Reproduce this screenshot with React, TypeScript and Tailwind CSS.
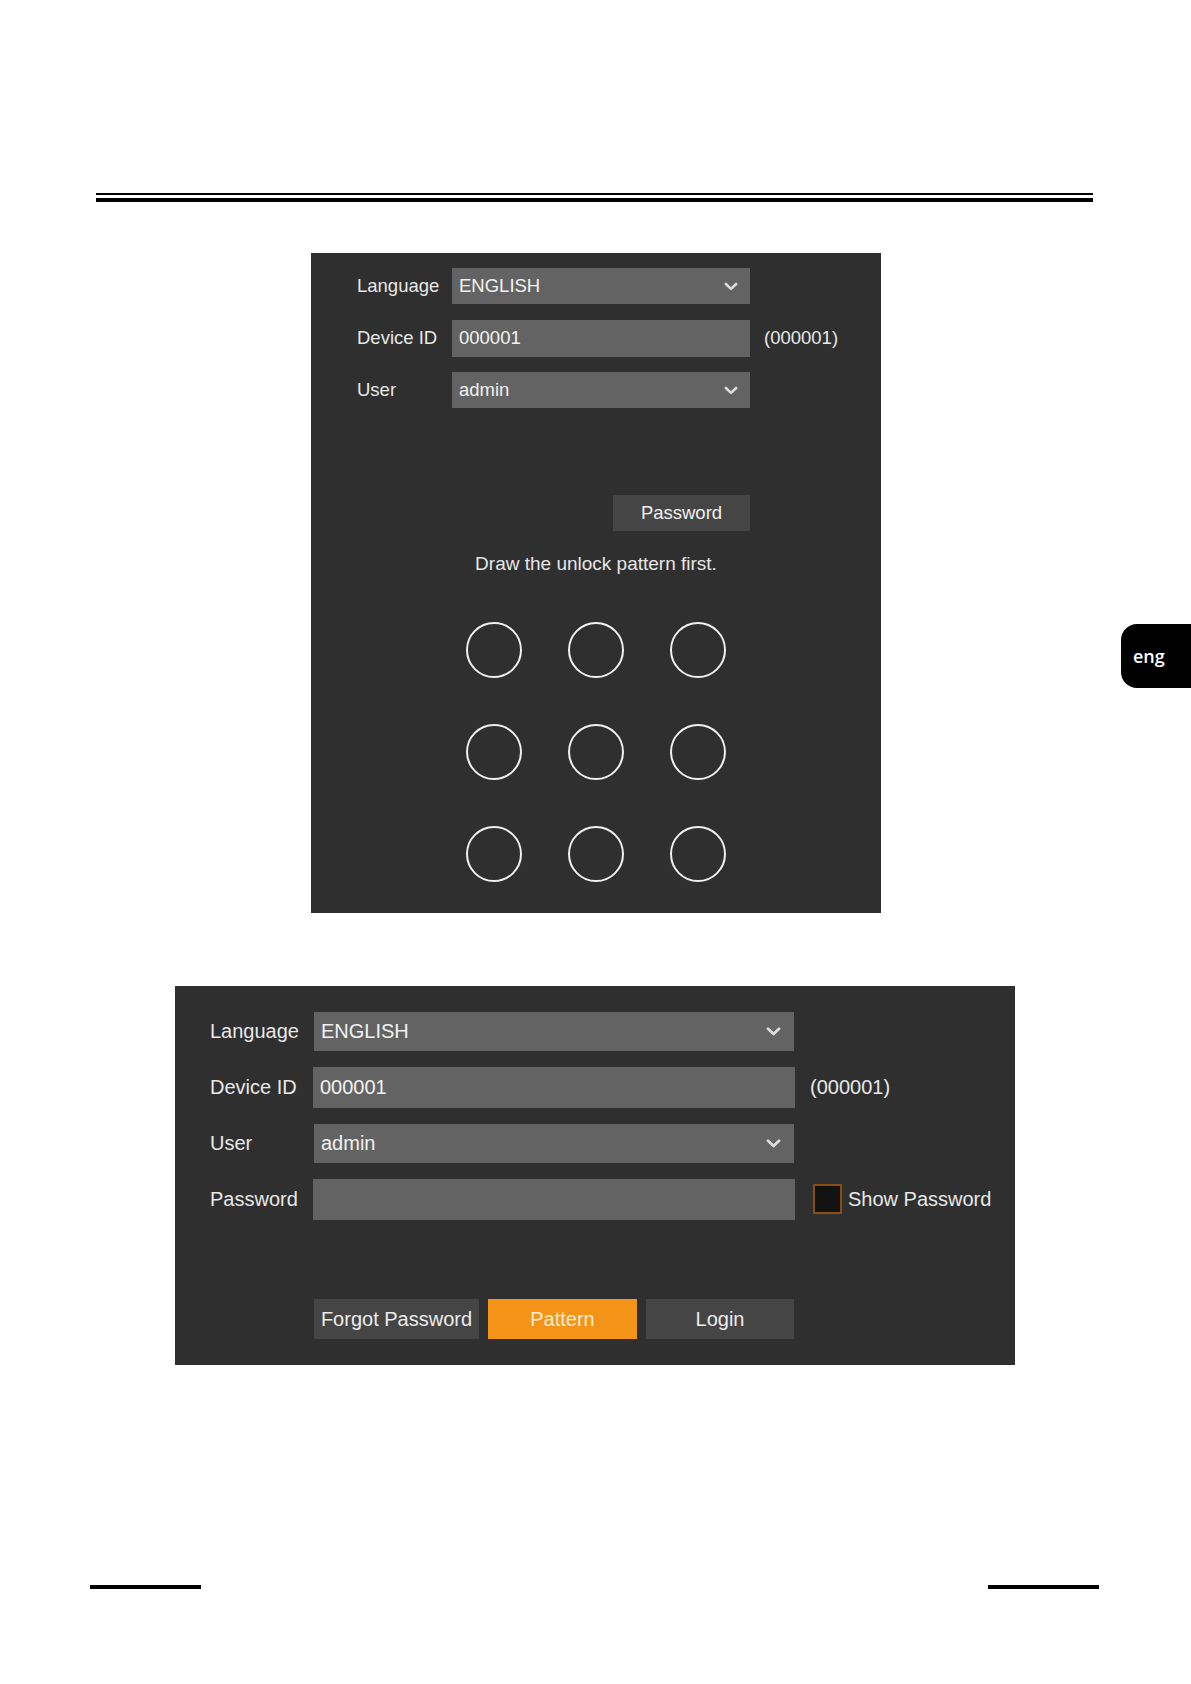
import React from "react";

const Chevron = ({ w = 15 }: { w?: number }) => (
  <svg width={w} height={9} viewBox="0 0 15 9" fill="none">
    <polyline points="2,1.8 7.5,7 13,1.8" stroke="#dcdcdc" strokeWidth="2.8" strokeLinecap="round" strokeLinejoin="round" />
  </svg>
);

function Panel1() {
  const rows = [
    { label: "Language", value: "ENGLISH", select: true, h: "h-[36px]" },
    { label: "Device ID", value: "000001", select: false, h: "h-[37px]", extra: "(000001)" },
    { label: "User", value: "admin", select: true, h: "h-[36px]" },
  ];
  return (
    <div className="ml-[311px] mt-[51px] w-[570px] h-[660px] bg-[#2f2f2f] flex flex-col pt-[7px] text-[18.5px] text-[#e8e8e8]">
      {rows.map((r) => (
        <div key={r.label} className="h-[52px] flex items-center pl-[46px]">
          <div className="w-[95px] leading-none">{r.label}</div>
          <div className={`w-[298px] ${r.h} bg-[#636363] flex items-center justify-between pl-[7px] pr-[12px] leading-none text-[#f2f2f2]`}>
            <span>{r.value}</span>
            {r.select && <Chevron w={14} />}
          </div>
          {r.extra && <div className="ml-[14px] leading-none">{r.extra}</div>}
        </div>
      ))}
      <div className="ml-[302px] mt-[79px] w-[137px] h-[36px] bg-[#454545] flex items-center justify-center leading-none text-[#f0f0f0]">
        Password
      </div>
      <div className="mt-[22px] h-[22px] leading-[22px] text-center text-[19px] text-[#e6e6e6]">Draw the unlock pattern first.</div>
      <div className="mt-[47px] mx-auto grid grid-cols-[56px_56px_56px] gap-x-[46px] gap-y-[46px]">
        {Array.from({ length: 9 }).map((_, i) => (
          <div key={i} className="w-[56px] h-[56px] rounded-full border-[2px] border-[#f0f0f0]" />
        ))}
      </div>
    </div>
  );
}

function Panel2() {
  const rows = [
    { label: "Language", value: "ENGLISH", select: true },
    { label: "Device ID", value: "000001", select: false, extra: "(000001)" },
    { label: "User", value: "admin", select: true },
    { label: "Password", value: "", select: false, check: true },
  ];
  return (
    <div className="ml-[175px] mt-[73px] w-[840px] h-[379px] bg-[#2f2f2f] flex flex-col pt-[17px] text-[20px] text-[#e8e8e8]">
      {rows.map((r) => (
        <div key={r.label} className="h-[56px] flex items-center pl-[35px]">
          <div className="w-[104px] leading-none">{r.label}</div>
          <div
            className={`${r.select ? "w-[480px] h-[39px]" : "w-[482px] h-[41px] -ml-[1px]"} bg-[#636363] flex items-center justify-between pl-[7px] pr-[13px] leading-none text-[#f2f2f2]`}
          >
            <span>{r.value}</span>
            {r.select && <Chevron />}
          </div>
          {r.extra && <div className="ml-[15px] leading-none">{r.extra}</div>}
          {r.check && (
            <div className="flex items-center ml-[18px]">
              <div className="w-[29px] h-[30px] border-[2px] border-[#8c4c10] bg-[#121212]" />
              <span className="ml-[6px] leading-none">Show Password</span>
            </div>
          )}
        </div>
      ))}
      <div className="ml-[139px] mt-[72px] flex gap-[9px] leading-none">
        <div className="w-[165px] h-[40px] bg-[#454545] flex items-center justify-center text-[#ececec]">Forgot Password</div>
        <div className="w-[149px] h-[40px] bg-[#f39419] flex items-center justify-center text-[#fbecd2]">Pattern</div>
        <div className="w-[148px] h-[40px] bg-[#454545] flex items-center justify-center text-[#ececec]">Login</div>
      </div>
    </div>
  );
}

export default function App() {
  return (
    <div className="relative w-[1191px] h-[1684px] bg-white overflow-hidden font-['Liberation_Sans',Arial,sans-serif]">
      <div className="pt-[193px] pl-[96px]">
        <div className="w-[997px] h-[2px] bg-black" />
        <div className="w-[997px] h-[4px] bg-black mt-[3px]" />
      </div>
      <Panel1 />
      <Panel2 />
      <div className="mt-[220px] flex justify-between pl-[90px] pr-[92px]">
        <div className="w-[111px] h-[4px] bg-black" />
        <div className="w-[111px] h-[4px] bg-black" />
      </div>
      <div className="absolute right-0 top-[624px] w-[70px] h-[64px] bg-black rounded-l-[16px] flex items-center pl-[12px] text-white text-[18px] font-semibold font-['Open_Sans',sans-serif] leading-none">
        eng
      </div>
    </div>
  );
}
